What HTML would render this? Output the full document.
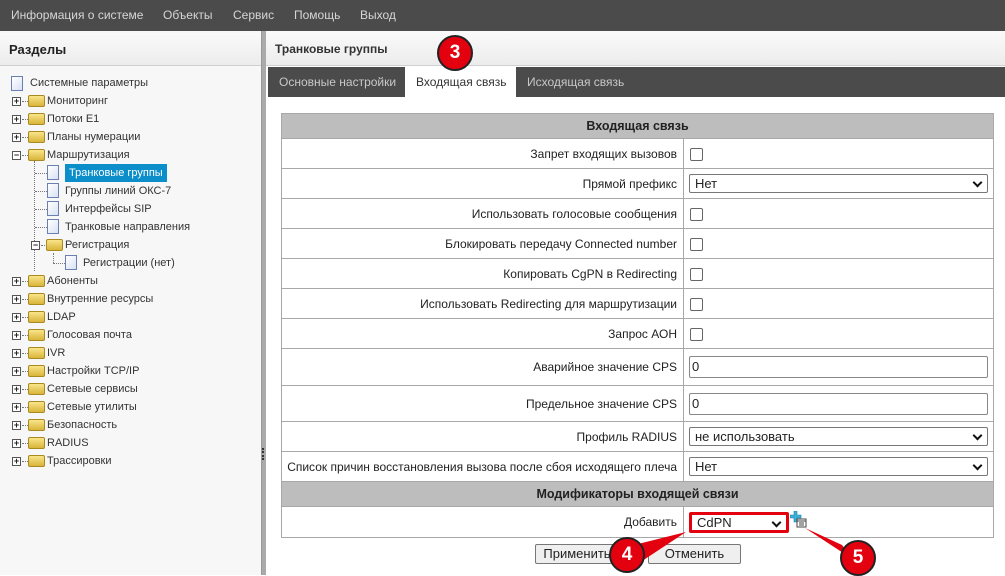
<!DOCTYPE html>
<html><head><meta charset="utf-8"><style>
*{box-sizing:border-box;margin:0;padding:0}
body{width:1005px;height:575px;overflow:hidden;background:#fff;font-family:"Liberation Sans","DejaVu Sans",sans-serif;font-size:12px;color:#222;position:relative}
.top{position:absolute;left:0;top:0;width:1005px;height:31px;background:#4b4b4b}
.top span{position:absolute;top:8px;color:#d6d6d6;font-size:12px}
.left{position:absolute;left:0;top:31px;width:261px;height:544px;background:#f7f7f7}
.lh{position:absolute;left:0;top:33px;width:261px;height:33px;background:linear-gradient(#fafafa,#ececec);border-bottom:1px solid #d0d0d0;font-weight:bold;font-size:13px;padding:9px 9px}
.split{position:absolute;left:261px;top:31px;width:5px;height:544px;background:#aaa;border-left:1px solid #999}
.ti{position:absolute;height:18px;font-size:11px;color:#333;line-height:18px;white-space:nowrap}
.pm{position:absolute;width:9px;height:9px;border:1px solid #555;background:#fff;font-size:9px;line-height:7px;text-align:center;font-weight:bold}
.fold{position:absolute;width:17px;height:12px;background:linear-gradient(#f9e58a,#d9b53a);border:1px solid #a88a20;border-radius:2px}
.doc{position:absolute;width:12px;height:15px;background:linear-gradient(135deg,#fff,#d8e2f4);border:1px solid #6b7fb0}
.dh{position:absolute;border-top:1px dotted #777;height:0}
.dv{position:absolute;border-left:1px dotted #777;width:0}
.rh{position:absolute;left:266px;top:31px;width:739px;height:35px;background:linear-gradient(#fafafa,#ececec);border-bottom:1px solid #d0d0d0;font-weight:bold;font-size:12px;padding:11px 9px;color:#333}
.tab{position:absolute;top:67px;height:30px;background:#4b4b4b;color:#c8c8c8;font-size:12px;line-height:30px;padding-left:11px}
table{position:absolute;left:281px;top:113px;width:713px;border-collapse:collapse;table-layout:fixed}
td{border:1px solid #a8a8a8;height:30px;font-size:12px;padding:0 6px}
td.l{text-align:right;white-space:nowrap;font-size:12px;padding:0 6px 0 0}
tr.h td{background:#bdbdbd;text-align:center;font-weight:bold;height:25px;font-size:12.5px}
.cb{display:inline-block;width:13px;height:13px;border:1px solid #666;border-radius:2px;vertical-align:middle;background:#fff}
.sel{height:19px;border:1px solid #777;border-radius:2px;font-size:13px;line-height:17px;padding-left:5px;position:relative;background:#fff}
.sel:after{content:"";position:absolute;right:6px;top:4px;width:5px;height:5px;border-right:2px solid #111;border-bottom:2px solid #111;transform:rotate(45deg)}
.inp{height:22px;border:1px solid #888;border-radius:2px;font-size:13px;line-height:20px;padding-left:2px}
.btn{position:absolute;top:544px;height:20px;background:#efefef;border:1px solid #777;border-radius:2px;font-size:13px;text-align:center;line-height:18px}
.badge{position:absolute;width:36px;height:36px;border-radius:50%;background:#e3000f;border:2px solid #222;color:#fff;font-weight:bold;font-size:19px;text-align:center;line-height:32px}
#tree{position:absolute;left:0;top:1px;width:261px;height:500px}
</style></head><body>
<div class="top">
<span style="left:11px">Информация о системе</span><span style="left:163px">Объекты</span><span style="left:233px">Сервис</span><span style="left:294px">Помощь</span><span style="left:360px">Выход</span></div>
<div class="left"></div>
<div class="lh">Разделы</div>
<div class="split"></div>
<div style="position:absolute;left:262px;top:448px;width:2px;height:12px;border-left:2px dotted #333"></div>

<div id="tree">
<div class="doc" style="left:11px;top:75px"></div><div class="ti" style="left:30px;top:73px">Системные параметры</div>
<div class="dv" style="left:34px;top:160px;height:110px"></div>
<div class="pm" style="left:12px;top:96px">+</div><div class="dh" style="left:22px;top:100px;width:8px"></div><div class="fold" style="left:28px;top:94px"></div><div class="ti" style="left:47px;top:91px">Мониторинг</div>
<div class="pm" style="left:12px;top:114px">+</div><div class="dh" style="left:22px;top:118px;width:8px"></div><div class="fold" style="left:28px;top:112px"></div><div class="ti" style="left:47px;top:109px">Потоки E1</div>
<div class="pm" style="left:12px;top:132px">+</div><div class="dh" style="left:22px;top:136px;width:8px"></div><div class="fold" style="left:28px;top:130px"></div><div class="ti" style="left:47px;top:127px">Планы нумерации</div>
<div class="pm" style="left:12px;top:150px">−</div><div class="dh" style="left:22px;top:154px;width:8px"></div><div class="fold" style="left:28px;top:148px"></div><div class="ti" style="left:47px;top:145px">Маршрутизация</div>
<div class="dh" style="left:35px;top:172px;width:12px"></div><div class="doc" style="left:47px;top:164px"></div><div class="ti" style="left:65px;top:163px;background:#0b8ec9;color:#fff;padding:0 4px">Транковые группы</div>
<div class="dh" style="left:35px;top:190px;width:12px"></div><div class="doc" style="left:47px;top:182px"></div><div class="ti" style="left:65px;top:181px">Группы линий ОКС-7</div>
<div class="dh" style="left:35px;top:208px;width:12px"></div><div class="doc" style="left:47px;top:200px"></div><div class="ti" style="left:65px;top:199px">Интерфейсы SIP</div>
<div class="dh" style="left:35px;top:226px;width:12px"></div><div class="doc" style="left:47px;top:218px"></div><div class="ti" style="left:65px;top:217px">Транковые направления</div>
<div class="pm" style="left:31px;top:240px">−</div><div class="dh" style="left:41px;top:244px;width:6px"></div><div class="fold" style="left:46px;top:238px"></div><div class="ti" style="left:65px;top:235px">Регистрация</div>
<div class="dv" style="left:53px;top:252px;height:10px"></div><div class="dh" style="left:53px;top:262px;width:12px"></div><div class="doc" style="left:65px;top:254px"></div><div class="ti" style="left:83px;top:253px">Регистрации (нет)</div>
<div class="pm" style="left:12px;top:276px">+</div><div class="dh" style="left:22px;top:280px;width:8px"></div><div class="fold" style="left:28px;top:274px"></div><div class="ti" style="left:47px;top:271px">Абоненты</div>
<div class="pm" style="left:12px;top:294px">+</div><div class="dh" style="left:22px;top:298px;width:8px"></div><div class="fold" style="left:28px;top:292px"></div><div class="ti" style="left:47px;top:289px">Внутренние ресурсы</div>
<div class="pm" style="left:12px;top:312px">+</div><div class="dh" style="left:22px;top:316px;width:8px"></div><div class="fold" style="left:28px;top:310px"></div><div class="ti" style="left:47px;top:307px">LDAP</div>
<div class="pm" style="left:12px;top:330px">+</div><div class="dh" style="left:22px;top:334px;width:8px"></div><div class="fold" style="left:28px;top:328px"></div><div class="ti" style="left:47px;top:325px">Голосовая почта</div>
<div class="pm" style="left:12px;top:348px">+</div><div class="dh" style="left:22px;top:352px;width:8px"></div><div class="fold" style="left:28px;top:346px"></div><div class="ti" style="left:47px;top:343px">IVR</div>
<div class="pm" style="left:12px;top:366px">+</div><div class="dh" style="left:22px;top:370px;width:8px"></div><div class="fold" style="left:28px;top:364px"></div><div class="ti" style="left:47px;top:361px">Настройки TCP/IP</div>
<div class="pm" style="left:12px;top:384px">+</div><div class="dh" style="left:22px;top:388px;width:8px"></div><div class="fold" style="left:28px;top:382px"></div><div class="ti" style="left:47px;top:379px">Сетевые сервисы</div>
<div class="pm" style="left:12px;top:402px">+</div><div class="dh" style="left:22px;top:406px;width:8px"></div><div class="fold" style="left:28px;top:400px"></div><div class="ti" style="left:47px;top:397px">Сетевые утилиты</div>
<div class="pm" style="left:12px;top:420px">+</div><div class="dh" style="left:22px;top:424px;width:8px"></div><div class="fold" style="left:28px;top:418px"></div><div class="ti" style="left:47px;top:415px">Безопасность</div>
<div class="pm" style="left:12px;top:438px">+</div><div class="dh" style="left:22px;top:442px;width:8px"></div><div class="fold" style="left:28px;top:436px"></div><div class="ti" style="left:47px;top:433px">RADIUS</div>
<div class="pm" style="left:12px;top:456px">+</div><div class="dh" style="left:22px;top:460px;width:8px"></div><div class="fold" style="left:28px;top:454px"></div><div class="ti" style="left:47px;top:451px">Трассировки</div>
</div>

<div class="rh">Транковые группы</div>
<div class="tab" style="left:268px;width:137px">Основные настройки</div>
<div class="tab" style="left:405px;width:111px;background:#fff;color:#333">Входящая связь</div>
<div class="tab" style="left:516px;width:489px">Исходящая связь</div>

<table>
<colgroup><col style="width:402px"><col></colgroup>
<tr class="h"><td colspan="2">Входящая связь</td></tr>
<tr><td class="l">Запрет входящих вызовов</td><td><span class="cb"></span></td></tr>
<tr><td class="l">Прямой префикс</td><td style="padding:0 5px"><div class="sel">Нет</div></td></tr>
<tr><td class="l">Использовать голосовые сообщения</td><td><span class="cb"></span></td></tr>
<tr><td class="l">Блокировать передачу Connected number</td><td><span class="cb"></span></td></tr>
<tr><td class="l">Копировать CgPN в Redirecting</td><td><span class="cb"></span></td></tr>
<tr><td class="l">Использовать Redirecting для маршрутизации</td><td><span class="cb"></span></td></tr>
<tr><td class="l">Запрос АОН</td><td><span class="cb"></span></td></tr>
<tr><td class="l" style="height:37px">Аварийное значение CPS</td><td style="padding:0 5px"><div class="inp">0</div></td></tr>
<tr><td class="l" style="height:36px">Предельное значение CPS</td><td style="padding:0 5px"><div class="inp">0</div></td></tr>
<tr><td class="l">Профиль RADIUS</td><td style="padding:0 5px"><div class="sel">не использовать</div></td></tr>
<tr><td class="l">Список причин восстановления вызова после сбоя исходящего плеча</td><td style="padding:0 5px"><div class="sel">Нет</div></td></tr>
<tr class="h"><td colspan="2">Модификаторы входящей связи</td></tr>
<tr><td class="l" style="height:31px">Добавить</td><td style="padding:0 5px"><div class="sel" style="width:100px;border:3px solid #e3000f;height:21px;line-height:15px">CdPN</div></td></tr>
</table>
<svg style="position:absolute;left:790px;top:511px" width="18" height="18"><path d="M4 0h3v4h4v3H7v4H4V7H0V4h4z" fill="#3ab0d8" stroke="#1a7fa8" stroke-width=".6"/><rect x="7" y="8" width="9" height="8" fill="#fff" stroke="#444"/><path d="M7 10h9M9 12h5M9 14h5" stroke="#444"/></svg>
<div class="btn" style="left:535px;width:84px">Применить</div>
<div class="btn" style="left:648px;width:93px">Отменить</div>
<svg style="position:absolute;left:0;top:0" width="1005" height="575"><polygon points="686,532 622,548 636,565" fill="#e3000f"/><polygon points="805,528 842,545 854,560" fill="#e3000f"/></svg>
<div class="badge" style="left:437px;top:35px">3</div>
<div class="badge" style="left:609px;top:537px">4</div>
<div class="badge" style="left:840px;top:540px">5</div>
</body></html>
